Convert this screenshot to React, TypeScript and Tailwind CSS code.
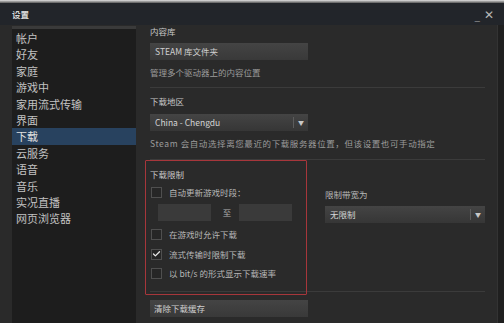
import { Check } from "lucide-react";

const cjk = { fontFamily: '"Noto Sans CJK SC", "Liberation Sans", sans-serif' };

const navItems = [
  "帐户",
  "好友",
  "家庭",
  "游戏中",
  "家用流式传输",
  "界面",
  "下载",
  "云服务",
  "语音",
  "音乐",
  "实况直播",
  "网页浏览器",
];

function Checkbox({ label, checked }: { label: string; checked?: boolean }) {
  return (
    <div className="flex h-[12px] items-center gap-[7px] pl-[1px]">
      <div className="flex h-[11px] w-[11px] items-center justify-center border border-[#4f4f4f] bg-[#262626]">
        {checked && <Check size={10} strokeWidth={3.5} className="text-[#e8e8e8]" />}
      </div>
      <span className="text-[8.5px] leading-[12px] text-[#b8b8b8]">{label}</span>
    </div>
  );
}

function Dropdown({ value, className }: { value: string; className?: string }) {
  return (
    <div
      className={
        "flex h-[17px] items-center bg-gradient-to-b from-[#444] to-[#363636] " + (className ?? "")
      }
    >
      <span className="flex-1 pl-[5px] text-[8.5px] text-[#d4d4d4]">{value}</span>
      <div className="h-[11px] w-px bg-[#5c5c5c]" />
      <span className="w-[14px] text-center text-[6px] text-[#c8c8c8]">▼</span>
    </div>
  );
}

export default function App() {
  return (
    <div className="h-[323px] w-[504px] overflow-hidden bg-[#2a2a2a]" style={cjk}>
      <div className="h-[3px] bg-gradient-to-b from-[#e4e4e4] to-[#5a5a5a]" />
      {/* title bar */}
      <div className="flex h-[22px] items-center bg-[#22252a] pl-[12px] pr-[10px]">
        <span className="text-[8.5px] font-bold text-[#d8d8d8]">设置</span>
        <div className="flex-1" />
        <span className="mr-[4px] mt-[3px] text-[10px] leading-none text-[#9a9a9a]">_</span>
        <span className="text-[12px] leading-none text-[#b8b8b8]">✕</span>
      </div>

      <div className="flex h-[298px]">
        {/* sidebar */}
        <div className="ml-[12px] mt-[1px] flex w-[124px] flex-col">
          <div className="h-[3px] bg-[#3a3a3a]" />
          <div className="flex-1 bg-[#1d1d1d] pt-[1px]">
            {navItems.map((item) => (
              <div
                key={item}
                className={
                  "h-[16.4px] pl-[4px] text-[11px] leading-[16.4px] " +
                  (item === "下载" ? "bg-[#28425f] text-[#e0e0e0]" : "text-[#c2c2c2]")
                }
              >
                {item}
              </div>
            ))}
          </div>
        </div>

        {/* content */}
        <div className="relative flex-1 pl-[14px] pr-[12px]">
          <div className="h-[12px] text-[8.5px] leading-[12px] text-[#c8c8c8]">内容库</div>
          <div className="mt-[6px] flex h-[17px] w-[158px] items-center bg-gradient-to-b from-[#444] to-[#393939] pl-[5px] text-[8.5px] text-[#d0d0d0]">
            STEAM 库文件夹
          </div>
          <div className="mt-[6px] h-[12px] text-[8.5px] leading-[12px] text-[#9c9c9c]">
            管理多个驱动器上的内容位置
          </div>
          <div className="mt-[9px] h-px bg-[#3b3b3b]" />

          <div className="mt-[7px] h-[12px] text-[8.5px] leading-[12px] text-[#c8c8c8]">下载地区</div>
          <Dropdown value="China - Chengdu" className="mt-[7px] w-[158px]" />
          <div className="mt-[6px] h-[12px] whitespace-nowrap text-[8.5px] leading-[12px] tracking-[0.6px] text-[#9c9c9c]">
            Steam 会自动选择离您最近的下载服务器位置，但该设置也可手动指定
          </div>
          <div className="mt-[10px] h-px bg-[#3b3b3b]" />

          <div className="mt-[8px] h-[12px] text-[8.5px] leading-[12px] text-[#c8c8c8]">下载限制</div>
          <div className="flex">
            <div className="w-[175px]">
              <div className="mt-[6px]">
                <Checkbox label="自动更新游戏时段：" />
              </div>
              <div className="mt-[6px] flex h-[17px] items-center pl-[8px]">
                <div className="h-[17px] w-[53px] bg-[#3a3a3a]" />
                <span className="w-[28px] pl-[4px] text-center text-[8.5px] text-[#b0b0b0]">至</span>
                <div className="h-[17px] w-[53px] bg-[#3a3a3a]" />
              </div>
              <div className="mt-[7px]">
                <Checkbox label="在游戏时允许下载" />
              </div>
              <div className="mt-[8px]">
                <Checkbox label="流式传输时限制下载" checked />
              </div>
              <div className="mt-[7px]">
                <Checkbox label="以 bit/s 的形式显示下载速率" />
              </div>
            </div>
            <div className="flex-1">
              <div className="mt-[8px] h-[12px] text-[8.5px] leading-[12px] text-[#b8b8b8]">限制带宽为</div>
              <Dropdown value="无限制" className="mt-[6px]" />
            </div>
          </div>
          <div className="mt-[12px] h-px bg-[#3b3b3b]" />
          <div className="mt-[8px] flex h-[17px] w-[158px] items-center bg-gradient-to-b from-[#444] to-[#393939] pl-[4px] text-[8.5px] text-[#d0d0d0]">
            清除下载缓存
          </div>

          {/* annotation box */}
          <div className="absolute left-[9px] top-[135px] h-[135px] w-[162px] rounded-[1px] border-[1.5px] border-[#a7363b]" />
        </div>

        {/* scrollbar */}
        <div className="w-[7px] border-l border-[#333] bg-[#1f1f1f]" />
      </div>
    </div>
  );
}
